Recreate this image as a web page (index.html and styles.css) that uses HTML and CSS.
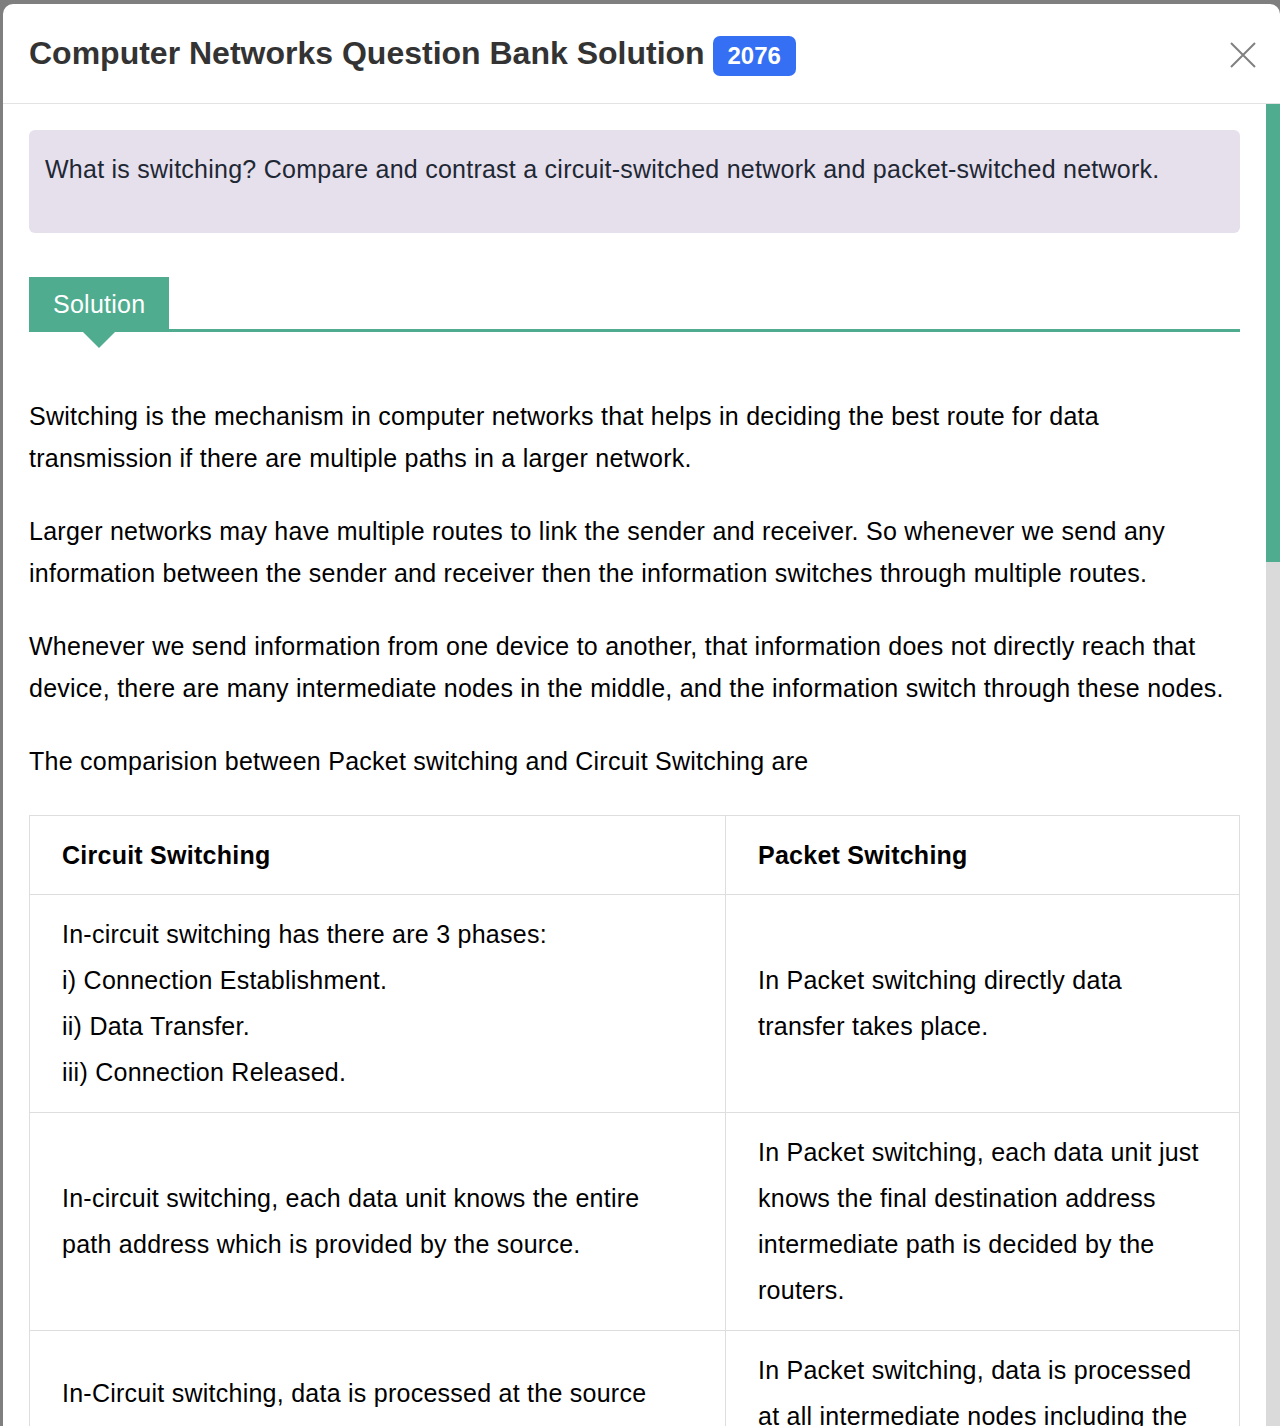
FILE: index.html
```html
<!DOCTYPE html>
<html lang="en">
<head>
<meta charset="utf-8">
<title>Computer Networks Question Bank Solution</title>
<link rel="stylesheet" href="styles.css">
</head>
<body>
<div class="modal">
  <header class="modal-header">
    <h1 class="modal-title">Computer Networks Question Bank Solution <span class="badge">2076</span></h1>
    <button class="close" aria-label="Close">
      <svg width="26" height="26" viewBox="0 0 26 26"><path d="M1 1 L25 25 M25 1 L1 25" stroke="#808080" stroke-width="2" fill="none"/></svg>
    </button>
  </header>
  <div class="modal-body">
    <div class="content">
      <div class="question">What is switching? Compare and contrast a circuit-switched network and packet-switched network.</div>
      <div class="solution-head"><span class="solution-tab">Solution</span></div>
      <p>Switching is the mechanism in computer networks that helps in deciding the best route for data transmission if there are multiple paths in a larger network.</p>
      <p>Larger networks may have multiple routes to link the sender and receiver. So whenever we send any information between the sender and receiver then the information switches through multiple routes.</p>
      <p>Whenever we send information from one device to another, that information does not directly reach that device, there are many intermediate nodes in the middle, and the information switch through these nodes.</p>
      <p>The comparision between Packet switching and Circuit Switching are</p>
      <table class="compare">
        <colgroup><col class="col-a"><col class="col-b"></colgroup>
        <thead>
          <tr><th>Circuit Switching</th><th>Packet Switching</th></tr>
        </thead>
        <tbody>
          <tr>
            <td>In-circuit switching has there are 3 phases:<br>i) Connection Establishment.<br>ii) Data Transfer.<br>iii) Connection Released.</td>
            <td>In Packet switching directly data transfer takes place.</td>
          </tr>
          <tr>
            <td>In-circuit switching, each data unit knows the entire path address which is provided by the source.</td>
            <td>In Packet switching, each data unit just knows the final destination address intermediate path is decided by the routers.</td>
          </tr>
          <tr>
            <td>In-Circuit switching, data is processed at the source only.</td>
            <td>In Packet switching, data is processed at all intermediate nodes including the source node.</td>
          </tr>
        </tbody>
      </table>
    </div>
    <div class="scrollbar"><div class="thumb"></div></div>
  </div>
</div>
</body>
</html>
```

FILE: styles.css
```css
* { box-sizing: border-box; }

html, body {
  margin: 0;
  height: 100%;
  overflow: hidden;
}

body {
  background: #7f7f7f;
  font-family: "Liberation Sans", Arial, Helvetica, sans-serif;
  color: #000;
}

.modal {
  margin: 4px 0 0 3px;
  width: 1277px;
  height: 1422px;
  background: #fff;
  border-radius: 10px 10px 0 0;
  overflow: hidden;
  display: flex;
  flex-direction: column;
}

.modal-header {
  flex: none;
  height: 100px;
  border-bottom: 1px solid #e3e3e3;
  display: flex;
  align-items: center;
  justify-content: space-between;
  padding: 2px 24px 0 26px;
}

.modal-title {
  margin: 0;
  font-size: 32px;
  line-height: 40px;
  font-weight: 700;
  color: #333;
}

.badge {
  display: inline-block;
  margin-left: -1px;
  height: 40px;
  line-height: 40px;
  padding: 0 15px;
  border-radius: 7px;
  background: #346ff4;
  color: #fff;
  font-size: 24px;
  font-weight: 700;
  vertical-align: baseline;
}

.close {
  border: 0;
  background: none;
  padding: 0;
  width: 26px;
  height: 26px;
  display: flex;
  cursor: pointer;
}

.modal-body {
  flex: 1;
  display: flex;
  min-height: 0;
}

.content {
  flex: 1;
  padding: 26px 26px 0 26px;
  font-size: 25px;
  letter-spacing: 0.25px;
}

.question {
  background: #e6dfec;
  border-radius: 6px;
  color: #1e2834;
  line-height: 46px;
  padding: 16px 16px 41px;
}

.solution-head {
  position: relative;
  margin: 44px 0 63px;
  border-bottom: 3px solid #4fac8f;
  display: flex;
}

.solution-tab {
  position: relative;
  background: #4fac8f;
  color: #fff;
  height: 52px;
  line-height: 49px;
  padding: 3px 24px 0;
}

.solution-tab::after {
  content: "";
  position: absolute;
  left: 54px;
  top: calc(100% + 3px);
  border-left: 16px solid transparent;
  border-right: 16px solid transparent;
  border-top: 16px solid #4fac8f;
}

.content p {
  margin: 0 0 31px;
  line-height: 42px;
}

.compare {
  width: 100%;
  margin-top: 33px;
  border-collapse: collapse;
  table-layout: fixed;
}

.col-a { width: 696px; }
.col-b { width: 514px; }

.compare th,
.compare td {
  border: 1px solid #dedede;
  padding: 16px 40px 16px 32px;
  line-height: 46px;
  text-align: left;
  vertical-align: middle;
}

.compare td {
  padding-bottom: 17px;
}

.compare th:last-child,
.compare td:last-child {
  padding-right: 24px;
}

.compare th {
  font-weight: 700;
}

.scrollbar {
  flex: none;
  width: 15px;
  background: #dadada;
}

.thumb {
  height: 458px;
  background: #4fac8f;
}
```
